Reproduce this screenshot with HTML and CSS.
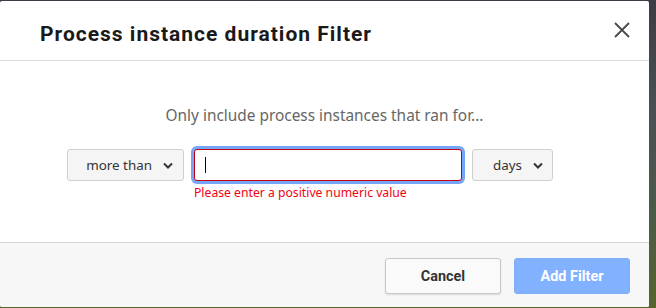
FILE: index.html
```html
<!DOCTYPE html>
<html lang="en">
<head>
  <meta charset="UTF-8" />
  <title>Process instance duration Filter</title>
  <link rel="stylesheet" href="styles.css">
</head>
<body>
  <div class="modal">
    <div class="modal-header">
      <h2 class="modal-title">Process instance duration Filter</h2>
      <button class="close-btn" aria-label="Close">
        <svg width="18" height="18" viewBox="0 0 18 18">
          <path d="M2 2 L16 16 M16 2 L2 16" stroke="#4a4a4a" stroke-width="1.8" fill="none"/>
        </svg>
      </button>
    </div>

    <div class="modal-body">
      <p class="intro">Only include process instances that ran for...</p>
      <div class="filter-row">
        <div class="select select-operator">
          <span>more than</span>
          <svg class="chevron" width="10" height="7" viewBox="0 0 10 7">
            <path d="M1 1.5 L5 5.5 L9 1.5" stroke="#333" stroke-width="2" fill="none"/>
          </svg>
        </div>
        <div class="value-field">
          <div class="input is-invalid"><span class="caret"></span></div>
          <div class="error">Please enter a positive numeric value</div>
        </div>
        <div class="select select-unit">
          <span>days</span>
          <svg class="chevron" width="10" height="7" viewBox="0 0 10 7">
            <path d="M1 1.5 L5 5.5 L9 1.5" stroke="#333" stroke-width="2" fill="none"/>
          </svg>
        </div>
      </div>
    </div>

    <div class="modal-footer">
      <button class="btn btn-default">Cancel</button>
      <button class="btn btn-primary" disabled>Add Filter</button>
    </div>
  </div>
</body>
</html>
```

FILE: styles.css
```css
body {
  margin: 0;
  height: 308px;
  overflow: hidden;
  font-family: 'Noto Sans', sans-serif;
  background: linear-gradient(180deg, #3d3c46 0%, #4b4f55 35%, #4c5a48 70%, #55652c 100%);
}

.modal {
  box-sizing: border-box;
  width: 649px;
  height: 306px;
  margin-top: 1px;
  background-color: #fff;
  border-radius: 2px;
  display: flex;
  flex-direction: column;
  overflow: hidden;
}

.modal-header {
  box-sizing: border-box;
  height: 60px;
  padding: 0 18px 0 40px;
  border-bottom: 1px solid #dcdcdc;
  display: flex;
  align-items: center;
  justify-content: space-between;
}

.modal-title {
  margin: 0;
  font-family: 'Roboto', sans-serif;
  font-size: 21px;
  font-weight: 700;
  color: #1a1a1a;
  letter-spacing: 1px;
  padding-top: 6px;
}

.close-btn {
  border: none;
  background: none;
  padding: 0;
  width: 18px;
  height: 18px;
  margin-top: -1px;
  cursor: pointer;
}

.modal-body {
  box-sizing: border-box;
  height: 181px;
  padding-top: 45px;
}

.intro {
  margin: 0 0 23px;
  text-align: center;
  font-size: 15.4px;
  line-height: 20px;
  color: #666;
}

.filter-row {
  display: flex;
  align-items: flex-start;
  gap: 10px;
  padding-left: 67px;
}

.select {
  box-sizing: border-box;
  height: 32px;
  background-color: #f5f5f5;
  border: 1px solid #cfcfcf;
  border-radius: 3px;
  display: flex;
  align-items: center;
  justify-content: flex-end;
  font-size: 13.4px;
  color: #333;
}

.select-operator {
  width: 117px;
  padding-right: 10px;
}

.select-unit {
  width: 81px;
  padding-right: 9px;
}

.chevron {
  margin-left: 11px;
}

.value-field {
  display: flex;
  flex-direction: column;
}

.input {
  box-sizing: border-box;
  width: 268px;
  height: 32px;
  background-color: #fff;
  border: 1px solid #ccc;
  border-radius: 3px;
  display: flex;
  align-items: center;
  padding-left: 10px;
}

.input.is-invalid {
  border-color: #c5000e;
  box-shadow: 0 0 0 3px #76a5f7;
}

.caret {
  width: 1px;
  height: 16px;
  background-color: #000;
}

.error {
  margin-top: 5px;
  font-size: 12.2px;
  line-height: 14px;
  color: #f2000f;
}

.modal-footer {
  flex: 1;
  background-color: #f7f7f7;
  border-top: 1px solid #d6d6d6;
  display: flex;
  justify-content: flex-end;
  align-items: flex-start;
  gap: 13px;
  padding: 15px 19px 0 0;
}

.btn {
  box-sizing: border-box;
  width: 116px;
  height: 36px;
  border-radius: 3px;
  font-family: 'Roboto', sans-serif;
  font-size: 14.4px;
  font-weight: 700;
  cursor: pointer;
}

.btn-default {
  background-color: #fafafa;
  border: 1px solid #c8c8c8;
  color: #333;
  box-shadow: 0 1px 2px rgba(0, 0, 0, 0.12);
}

.btn-primary {
  background-color: #82b1ff;
  border: 1px solid #7eacf8;
  color: #fff;
}
```
